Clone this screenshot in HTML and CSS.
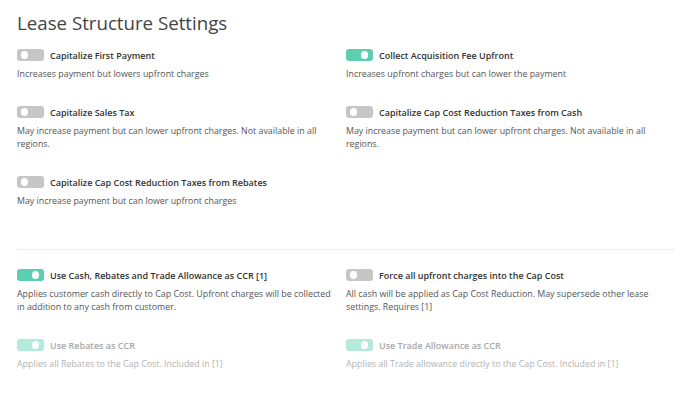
FILE: index.html
```html
<!DOCTYPE html>
<html lang="en">
<head>
    <meta charset="UTF-8">
    <meta name="viewport" content="width=device-width, initial-scale=1.0">
    <title>Lease Structure Settings</title>
<link rel="stylesheet" href="styles.css">
</head>
<body>
    <div class="page">
        <h1 class="title">Lease Structure Settings</h1>

        <div class="grid">
            <div class="setting">
                <div class="setting-head">
                    <span class="toggle"></span>
                    <span class="label">Capitalize First Payment</span>
                </div>
                <p class="desc">Increases payment but lowers upfront charges</p>
            </div>
            <div class="setting">
                <div class="setting-head">
                    <span class="toggle on"></span>
                    <span class="label">Collect Acquisition Fee Upfront</span>
                </div>
                <p class="desc">Increases upfront charges but can lower the payment</p>
            </div>
            <div class="setting">
                <div class="setting-head">
                    <span class="toggle"></span>
                    <span class="label">Capitalize Sales Tax</span>
                </div>
                <p class="desc">May increase payment but can lower upfront charges. Not available in all regions.</p>
            </div>
            <div class="setting">
                <div class="setting-head">
                    <span class="toggle"></span>
                    <span class="label">Capitalize Cap Cost Reduction Taxes from Cash</span>
                </div>
                <p class="desc">May increase payment but can lower upfront charges. Not available in all regions.</p>
            </div>
            <div class="setting">
                <div class="setting-head">
                    <span class="toggle"></span>
                    <span class="label">Capitalize Cap Cost Reduction Taxes from Rebates</span>
                </div>
                <p class="desc">May increase payment but can lower upfront charges</p>
            </div>
        </div>

        <hr class="divider">

        <div class="grid">
            <div class="setting">
                <div class="setting-head">
                    <span class="toggle on"></span>
                    <span class="label">Use Cash, Rebates and Trade Allowance as CCR [1]</span>
                </div>
                <p class="desc">Applies customer cash directly to Cap Cost. Upfront charges will be collected in addition to any cash from customer.</p>
            </div>
            <div class="setting">
                <div class="setting-head">
                    <span class="toggle"></span>
                    <span class="label">Force all upfront charges into the Cap Cost</span>
                </div>
                <p class="desc">All cash will be applied as Cap Cost Reduction. May supersede other lease settings. Requires [1]</p>
            </div>
            <div class="setting disabled">
                <div class="setting-head">
                    <span class="toggle on"></span>
                    <span class="label">Use Rebates as CCR</span>
                </div>
                <p class="desc">Applies all Rebates to the Cap Cost. Included in [1]</p>
            </div>
            <div class="setting disabled">
                <div class="setting-head">
                    <span class="toggle on"></span>
                    <span class="label">Use Trade Allowance as CCR</span>
                </div>
                <p class="desc">Applies all Trade allowance directly to the Cap Cost. Included in [1]</p>
            </div>
        </div>
    </div>
</body>
</html>
```

FILE: styles.css
```css
body {
    font-family: "Open Sans", Arial, sans-serif;
    background-color: #ffffff;
    margin: 0;
    padding: 0;
}

.page {
    padding: 10px 13px 0 17px;
}

.title {
    font-size: 18.7px;
    font-weight: 400;
    color: #444444;
    margin: 0 0 13px 0;
    line-height: 26px;
}

.grid {
    display: grid;
    grid-template-columns: 329px 329px;
}

.setting {
    margin-bottom: 25px;
}

.setting-head {
    display: flex;
    align-items: center;
    gap: 6px;
    height: 12px;
    margin-bottom: 7px;
}

.toggle {
    position: relative;
    width: 27px;
    height: 12px;
    border-radius: 3px;
    background-color: #c6c6c6;
    flex-shrink: 0;
}

.toggle::after {
    content: "";
    position: absolute;
    top: 2px;
    left: 4px;
    width: 7px;
    height: 8px;
    border-radius: 4px;
    background-color: #ffffff;
}

.toggle.on {
    background-color: #5dcfb0;
}

.toggle.on::after {
    left: 15px;
}

.label {
    font-size: 9px;
    font-weight: 600;
    color: #333333;
}

.desc {
    margin: 0;
    font-size: 8.85px;
    line-height: 13px;
    color: #555555;
    padding-right: 12px;
}

.disabled .toggle.on {
    background-color: #b3eadb;
}

.disabled .label {
    color: #a8a8a8;
}

.disabled .desc {
    color: #b2b2b2;
}

.divider {
    border: none;
    border-top: 1px solid #eeeeee;
    margin: 16px 0 19px 0;
}
```
